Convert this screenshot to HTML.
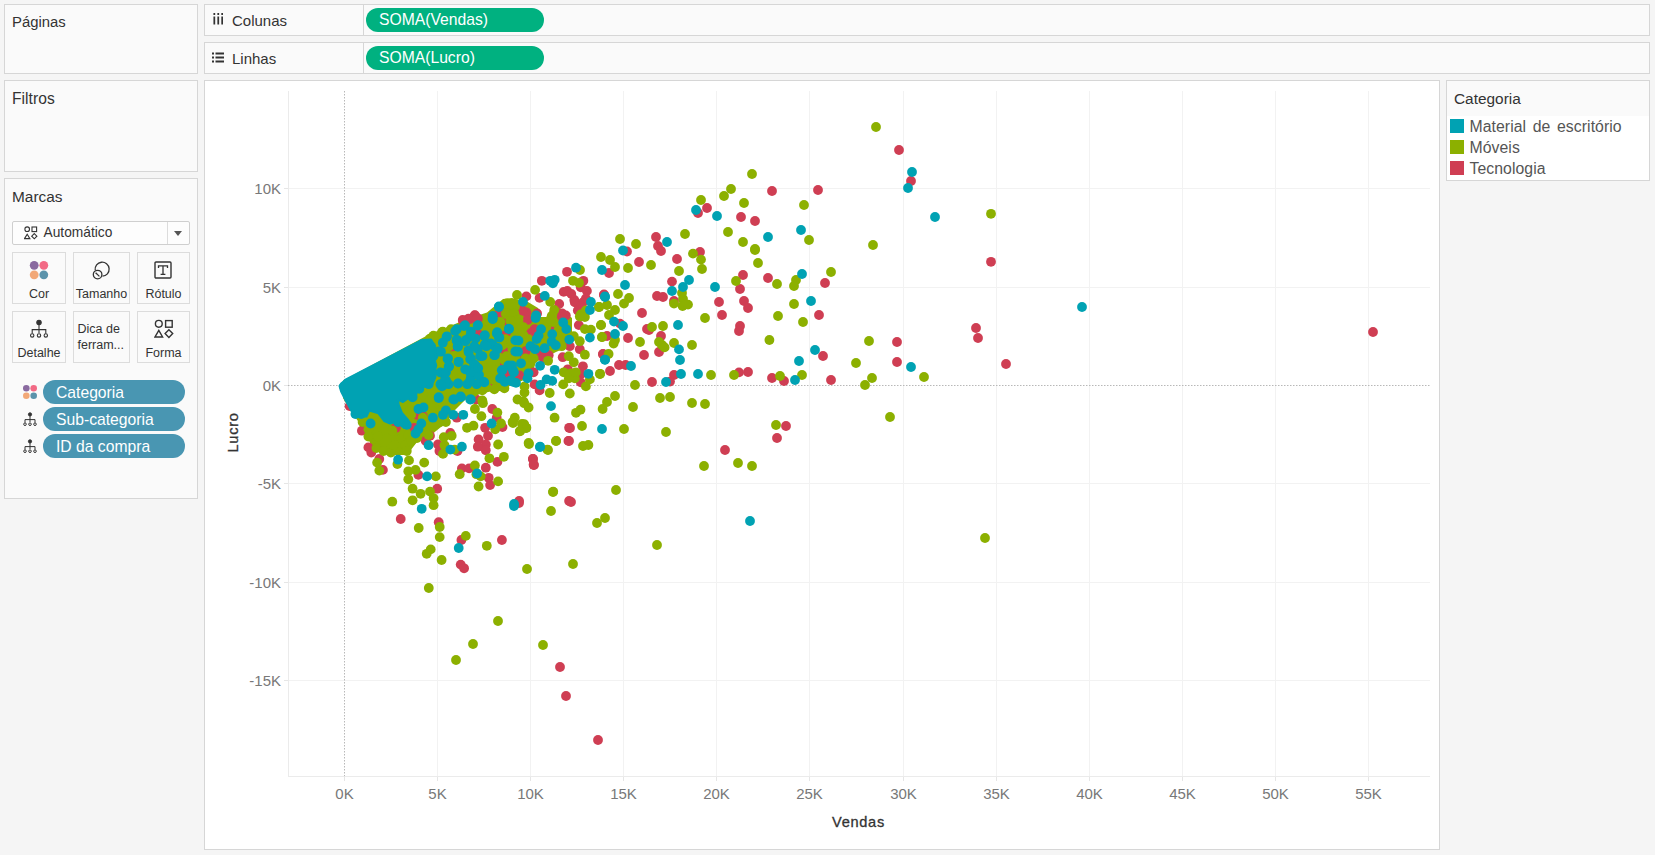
<!DOCTYPE html>
<html lang="pt-BR">
<head>
<meta charset="utf-8">
<title>Tableau - Vendas x Lucro</title>
<style>
html,body{margin:0;padding:0;}
body{width:1655px;height:855px;background:#f5f5f5;position:relative;overflow:hidden;font-family:"Liberation Sans",sans-serif;color:#333;}
.panel{position:absolute;box-sizing:border-box;background:#fafafa;border:1px solid #d6d6d6;}
.ptitle{position:absolute;left:7px;font-size:15px;color:#333;white-space:nowrap;}
.shelf-label{position:absolute;font-size:15px;color:#333;top:7px;left:27px;}
.shelf-sep{position:absolute;left:158px;top:0;bottom:0;width:1px;background:#d6d6d6;}
.pill{position:absolute;box-sizing:border-box;border-radius:12px;color:#fff;white-space:nowrap;}
.gpill{background:#00b180;left:161px;top:3px;width:178px;height:24px;font-size:15.7px;line-height:24px;padding-left:13px;}
.bpill{background:#4996b2;left:38px;width:142px;height:24px;font-size:15.7px;line-height:25.4px;padding-left:13px;}
.btn{position:absolute;box-sizing:border-box;border:1px solid #dcdcdc;background:#fafafa;font-size:12.5px;text-align:center;color:#333;}
.btn span{position:absolute;left:0;right:0;white-space:nowrap;}
.leg{position:absolute;left:22.5px;font-size:15.8px;word-spacing:2.2px;letter-spacing:0.05px;color:#555;white-space:nowrap;}
.sw{position:absolute;left:3px;width:14px;height:14px;}
svg text{font-family:"Liberation Sans",sans-serif;}
</style>
</head>
<body>
<!-- left column -->
<div class="panel" style="left:4px;top:4px;width:194px;height:70px;"><div class="ptitle" style="top:9px;font-size:14.85px;">Páginas</div></div>
<div class="panel" style="left:4px;top:80px;width:194px;height:92px;"><div class="ptitle" style="top:9px;font-size:15.6px;letter-spacing:0.05px;">Filtros</div></div>
<div class="panel" style="left:4px;top:178px;width:194px;height:321px;">
  <div class="ptitle" style="top:8.5px;font-size:15.4px;">Marcas</div>
  <div style="position:absolute;left:7px;top:42px;width:178px;height:24px;border:1px solid #cfcfcf;border-radius:2px;background:#fdfdfd;box-sizing:border-box;">
    <svg width="14" height="14" viewBox="0 0 14 14" style="position:absolute;left:11px;top:4px;" fill="none" stroke="#333" stroke-width="1.1"><circle cx="3.2" cy="3.2" r="2.3"/><rect x="8" y="1" width="4.6" height="4.6"/><path d="M3.2 8.2 L5.9 12.6 L0.5 12.6 Z"/><path d="M10.3 7.6 L12.9 10.2 L10.3 12.8 L7.7 10.2 Z"/></svg>
    <div style="position:absolute;left:30.5px;top:3px;font-size:13.75px;color:#333;">Automático</div>
    <div style="position:absolute;left:154px;top:0;bottom:0;width:1px;background:#dcdcdc;"></div>
    <div style="position:absolute;left:161px;top:9px;width:0;height:0;border-left:4px solid transparent;border-right:4px solid transparent;border-top:5px solid #555;"></div>
  </div>
  <!-- buttons row 1 -->
  <div class="btn" style="left:7px;top:73px;width:54px;height:52px;">
    <svg width="22" height="22" viewBox="0 0 22 22" style="position:absolute;left:15px;top:6.3px;"><circle cx="6.2" cy="6.3" r="4.4" fill="#8a6aa0"/><circle cx="15.8" cy="6.3" r="4.4" fill="#f26a85"/><circle cx="6.2" cy="15.8" r="4.4" fill="#f2a877"/><circle cx="15.8" cy="15.8" r="4.4" fill="#5b93ab"/></svg>
    <span style="top:34px;">Cor</span></div>
  <div class="btn" style="left:68px;top:73px;width:57px;height:52px;">
    <svg width="22" height="22" viewBox="0 0 22 22" style="position:absolute;left:17px;top:7px;" fill="none" stroke="#333" stroke-width="1.3"><path d="M4.2 10.2 A7 7 0 1 1 11.5 16.2"/><circle cx="6.6" cy="14.6" r="4.3"/><path d="M4.6 12.8 L8.4 16.4"/></svg>
    <span style="top:34px;">Tamanho</span></div>
  <div class="btn" style="left:132px;top:73px;width:53px;height:52px;">
    <svg width="20" height="20" viewBox="0 0 20 20" style="position:absolute;left:14.7px;top:7px;" fill="none" stroke="#333" stroke-width="1.4"><rect x="2" y="2" width="16" height="16" rx="1"/><path d="M5.5 8 V5.8 H14.5 V8 M10 5.8 V14.3 M7.6 14.3 H12.4" stroke-width="1.3"/></svg>
    <span style="top:34px;">Rótulo</span></div>
  <!-- buttons row 2 -->
  <div class="btn" style="left:7px;top:132px;width:54px;height:52px;">
    <svg width="22" height="22" viewBox="0 0 22 22" style="position:absolute;left:15px;top:7px;" fill="none" stroke="#333" stroke-width="1.1"><circle cx="11" cy="3.4" r="2.2" fill="#333"/><path d="M11 5.6 V14 M4.2 14.6 V10.6 H17.8 V14.6"/><circle cx="4.2" cy="16.4" r="1.7"/><circle cx="11" cy="16.4" r="1.7"/><circle cx="17.8" cy="16.4" r="1.7"/></svg>
    <span style="top:34px;">Detalhe</span></div>
  <div class="btn" style="left:68px;top:132px;width:57px;height:52px;text-align:left;">
    <span style="top:9px;left:3.5px;line-height:16px;white-space:normal;">Dica de<br>ferram...</span></div>
  <div class="btn" style="left:132px;top:132px;width:53px;height:52px;">
    <svg width="20" height="20" viewBox="0 0 20 20" style="position:absolute;left:16px;top:7px;" fill="none" stroke="#333" stroke-width="1.4"><circle cx="4.8" cy="4.8" r="3.4"/><rect x="11.6" y="1.6" width="6.6" height="6.6"/><path d="M4.8 11.4 L8.6 18 L1 18 Z"/><path d="M14.9 10.8 L18.7 14.6 L14.9 18.4 L11.1 14.6 Z"/></svg>
    <span style="top:34px;">Forma</span></div>
  <!-- pills -->
  <svg width="16" height="16" viewBox="0 0 16 16" style="position:absolute;left:17px;top:205px;"><circle cx="4.3" cy="4.3" r="3.3" fill="#8a6aa0"/><circle cx="11.7" cy="4.3" r="3.3" fill="#f26a85"/><circle cx="4.3" cy="11.7" r="3.3" fill="#f2a877"/><circle cx="11.7" cy="11.7" r="3.3" fill="#5b93ab"/></svg>
  <div class="pill bpill" style="top:201px;">Categoria</div>
  <svg width="16" height="16" viewBox="0 0 16 16" style="position:absolute;left:17px;top:233px;" fill="none" stroke="#333" stroke-width="1"><circle cx="8" cy="2.4" r="1.6" fill="#333"/><path d="M8 4 V10 M3 10.6 V7.6 H13 V10.6"/><circle cx="3" cy="12.2" r="1.3"/><circle cx="8" cy="12.2" r="1.3"/><circle cx="13" cy="12.2" r="1.3"/></svg>
  <div class="pill bpill" style="top:228px;">Sub-categoria</div>
  <svg width="16" height="16" viewBox="0 0 16 16" style="position:absolute;left:17px;top:260px;" fill="none" stroke="#333" stroke-width="1"><circle cx="8" cy="2.4" r="1.6" fill="#333"/><path d="M8 4 V10 M3 10.6 V7.6 H13 V10.6"/><circle cx="3" cy="12.2" r="1.3"/><circle cx="8" cy="12.2" r="1.3"/><circle cx="13" cy="12.2" r="1.3"/></svg>
  <div class="pill bpill" style="top:255px;">ID da compra</div>
</div>
<!-- shelves -->
<div class="panel" style="left:204px;top:4px;width:1446px;height:32px;">
  <svg width="10.5" height="12" viewBox="0 0 12 12" preserveAspectRatio="none" style="position:absolute;left:7.5px;top:8px;" fill="#333"><rect x="0.5" y="0" width="2" height="2"/><rect x="5" y="0" width="2" height="2"/><rect x="9.5" y="0" width="2" height="2"/><rect x="0.5" y="3.5" width="2" height="8"/><rect x="5" y="3.5" width="2" height="8"/><rect x="9.5" y="3.5" width="2" height="8"/></svg>
  <div class="shelf-label">Colunas</div><div class="shelf-sep"></div>
  <div class="pill gpill">SOMA(Vendas)</div>
</div>
<div class="panel" style="left:204px;top:42px;width:1446px;height:32px;">
  <svg width="12" height="11" viewBox="0 0 12 11" style="position:absolute;left:7px;top:9px;" fill="#333"><rect x="0" y="0.5" width="2" height="2"/><rect x="0" y="4.5" width="2" height="2"/><rect x="0" y="8.5" width="2" height="2"/><rect x="3.5" y="0.5" width="8.5" height="2"/><rect x="3.5" y="4.5" width="8.5" height="2"/><rect x="3.5" y="8.5" width="8.5" height="2"/></svg>
  <div class="shelf-label">Linhas</div><div class="shelf-sep"></div>
  <div class="pill gpill">SOMA(Lucro)</div>
</div>
<!-- legend -->
<div class="panel" style="left:1446px;top:80px;width:204px;height:101px;background:#fff;">
  <div style="position:absolute;left:0;top:0;right:0;height:35px;background:#fafafa;"></div>
  <div class="ptitle" style="top:8.5px;left:7px;font-size:15.4px;">Categoria</div>
  <div class="sw" style="top:38px;background:#00a2b3;"></div><div class="leg" style="top:37px;">Material de escritório</div>
  <div class="sw" style="top:59px;background:#8cb000;"></div><div class="leg" style="top:58px;">Móveis</div>
  <div class="sw" style="top:80px;background:#cf3e53;"></div><div class="leg" style="top:79px;">Tecnologia</div>
</div>
<!-- chart -->
<div class="panel" style="left:204px;top:80px;width:1236px;height:770px;background:#fff;">
<svg width="1234" height="768" viewBox="205 81 1234 768" style="position:absolute;left:0;top:0;">
<g shape-rendering="crispEdges">
<rect x="437" y="91" width="1" height="685" fill="#f2f2f2"/>
<rect x="437" y="776" width="1" height="5" fill="#e6e6e6"/>
<rect x="530" y="91" width="1" height="685" fill="#f2f2f2"/>
<rect x="530" y="776" width="1" height="5" fill="#e6e6e6"/>
<rect x="623" y="91" width="1" height="685" fill="#f2f2f2"/>
<rect x="623" y="776" width="1" height="5" fill="#e6e6e6"/>
<rect x="716" y="91" width="1" height="685" fill="#f2f2f2"/>
<rect x="716" y="776" width="1" height="5" fill="#e6e6e6"/>
<rect x="809" y="91" width="1" height="685" fill="#f2f2f2"/>
<rect x="809" y="776" width="1" height="5" fill="#e6e6e6"/>
<rect x="903" y="91" width="1" height="685" fill="#f2f2f2"/>
<rect x="903" y="776" width="1" height="5" fill="#e6e6e6"/>
<rect x="996" y="91" width="1" height="685" fill="#f2f2f2"/>
<rect x="996" y="776" width="1" height="5" fill="#e6e6e6"/>
<rect x="1089" y="91" width="1" height="685" fill="#f2f2f2"/>
<rect x="1089" y="776" width="1" height="5" fill="#e6e6e6"/>
<rect x="1182" y="91" width="1" height="685" fill="#f2f2f2"/>
<rect x="1182" y="776" width="1" height="5" fill="#e6e6e6"/>
<rect x="1275" y="91" width="1" height="685" fill="#f2f2f2"/>
<rect x="1275" y="776" width="1" height="5" fill="#e6e6e6"/>
<rect x="1368" y="91" width="1" height="685" fill="#f2f2f2"/>
<rect x="1368" y="776" width="1" height="5" fill="#e6e6e6"/>
<rect x="288" y="680" width="1142" height="1" fill="#f2f2f2"/>
<rect x="288" y="582" width="1142" height="1" fill="#f2f2f2"/>
<rect x="288" y="483" width="1142" height="1" fill="#f2f2f2"/>
<rect x="288" y="287" width="1142" height="1" fill="#f2f2f2"/>
<rect x="288" y="188" width="1142" height="1" fill="#f2f2f2"/>
<rect x="284" y="680" width="4" height="1" fill="#e6e6e6"/>
<rect x="284" y="582" width="4" height="1" fill="#e6e6e6"/>
<rect x="284" y="483" width="4" height="1" fill="#e6e6e6"/>
<rect x="284" y="385" width="4" height="1" fill="#e6e6e6"/>
<rect x="284" y="287" width="4" height="1" fill="#e6e6e6"/>
<rect x="284" y="188" width="4" height="1" fill="#e6e6e6"/>
<rect x="288" y="91" width="1" height="686" fill="#ebebeb"/>
<rect x="288" y="776" width="1142" height="1" fill="#ebebeb"/>
<rect x="344" y="776" width="1" height="5" fill="#e6e6e6"/>
</g>
<line x1="344.5" y1="91" x2="344.5" y2="776" stroke="#b8b8b8" stroke-width="1" stroke-dasharray="1.5 1.5"/>
<line x1="288" y1="385.5" x2="1430" y2="385.5" stroke="#b8b8b8" stroke-width="1" stroke-dasharray="1.5 1.5"/>
<g font-size="15" fill="#787878" text-anchor="middle">
<text x="344.5" y="799">0K</text>
<text x="437.5" y="799">5K</text>
<text x="530.5" y="799">10K</text>
<text x="623.5" y="799">15K</text>
<text x="716.5" y="799">20K</text>
<text x="809.5" y="799">25K</text>
<text x="903.5" y="799">30K</text>
<text x="996.5" y="799">35K</text>
<text x="1089.5" y="799">40K</text>
<text x="1182.5" y="799">45K</text>
<text x="1275.5" y="799">50K</text>
<text x="1368.5" y="799">55K</text>
</g>
<g font-size="15" fill="#787878" text-anchor="end">
<text x="281" y="685.7">-15K</text>
<text x="281" y="587.7">-10K</text>
<text x="281" y="488.7">-5K</text>
<text x="281" y="390.7">0K</text>
<text x="281" y="292.7">5K</text>
<text x="281" y="193.7">10K</text>
</g>
<text x="858.5" y="827" font-size="14.6" fill="#333" stroke="#333" stroke-width="0.3" letter-spacing="0.7" text-anchor="middle">Vendas</text>
<text transform="translate(238,432.5) rotate(-90)" font-size="14.6" fill="#333" stroke="#333" stroke-width="0.3" letter-spacing="0.7" text-anchor="middle">Lucro</text>
<polygon fill="#8cb000" points="343,380.5 430,334 470,318 487,312.5 496,305 503,299 512,298 528,302 538,308 541,317 548,317 551,306 560,308 572,318 572,345 556,352 546,357 536,362 531,377 505,388 480,394 465,400 455,410 446,423 431,435 417,442 407,455 388,455 373,449 363,428 350,410 343,398"/>
<g fill="#cf3e53">
<circle cx="349.6" cy="406.1" r="4.9"/><circle cx="361.9" cy="430.7" r="4.9"/><circle cx="368.4" cy="447.4" r="4.9"/><circle cx="371.3" cy="452.5" r="4.9"/><circle cx="379.3" cy="459" r="4.9"/><circle cx="382.9" cy="469.9" r="4.9"/><circle cx="395.9" cy="427.8" r="4.9"/><circle cx="417" cy="414.8" r="4.9"/><circle cx="422.8" cy="416.2" r="4.9"/><circle cx="430" cy="435.8" r="4.9"/><circle cx="425.7" cy="440.9" r="4.9"/><circle cx="414.1" cy="427.8" r="4.9"/><circle cx="438" cy="444.5" r="4.9"/><circle cx="439.4" cy="451" r="4.9"/><circle cx="457.5" cy="451" r="4.9"/><circle cx="456.8" cy="417.7" r="4.9"/><circle cx="450.3" cy="432.9" r="4.9"/><circle cx="492.3" cy="409" r="4.9"/><circle cx="496.7" cy="417.7" r="4.9"/><circle cx="485.1" cy="427.8" r="4.9"/><circle cx="488" cy="435.8" r="4.9"/><circle cx="478.6" cy="439.4" r="4.9"/><circle cx="485.8" cy="444.5" r="4.9"/><circle cx="477.8" cy="446.7" r="4.9"/><circle cx="485.8" cy="450.3" r="4.9"/><circle cx="502.5" cy="427.1" r="4.9"/><circle cx="497.4" cy="461.9" r="4.9"/><circle cx="461.9" cy="468.4" r="4.9"/><circle cx="469.1" cy="468.4" r="4.9"/><circle cx="485.8" cy="467.7" r="4.9"/><circle cx="488.7" cy="477.8" r="4.9"/><circle cx="490.1" cy="485.1" r="4.9"/><circle cx="418.4" cy="474.9" r="4.9"/><circle cx="437.2" cy="488.7" r="4.9"/><circle cx="532.9" cy="459" r="4.9"/><circle cx="533.6" cy="464.8" r="4.9"/><circle cx="569.1" cy="427.8" r="4.9"/><circle cx="568.4" cy="440.9" r="4.9"/><circle cx="569.1" cy="501" r="4.9"/><circle cx="519.1" cy="501" r="4.9"/><circle cx="400.7" cy="519" r="4.9"/><circle cx="438.7" cy="522.2" r="4.9"/><circle cx="461.4" cy="540" r="4.9"/><circle cx="501.9" cy="540" r="4.9"/><circle cx="460.7" cy="564.6" r="4.9"/><circle cx="464.1" cy="568.3" r="4.9"/><circle cx="462.7" cy="319.9" r="4.9"/><circle cx="468.5" cy="318.7" r="4.9"/><circle cx="474.9" cy="315.2" r="4.9"/><circle cx="477.9" cy="318.7" r="4.9"/><circle cx="501.3" cy="315.2" r="4.9"/><circle cx="504.8" cy="321.1" r="4.9"/><circle cx="505.9" cy="331.6" r="4.9"/><circle cx="505.9" cy="350.3" r="4.9"/><circle cx="504.8" cy="363.2" r="4.9"/><circle cx="508.3" cy="373.7" r="4.9"/><circle cx="495.4" cy="383" r="4.9"/><circle cx="477.9" cy="333.9" r="4.9"/><circle cx="452.1" cy="346.8" r="4.9"/><circle cx="567" cy="271.8" r="4.9"/><circle cx="541.8" cy="280.8" r="4.9"/><circle cx="583.4" cy="280.8" r="4.9"/><circle cx="580.8" cy="287.3" r="4.9"/><circle cx="586.9" cy="290.9" r="4.9"/><circle cx="563.7" cy="291.9" r="4.9"/><circle cx="567.3" cy="290.9" r="4.9"/><circle cx="571.3" cy="293.9" r="4.9"/><circle cx="574.3" cy="299.9" r="4.9"/><circle cx="574.8" cy="302.4" r="4.9"/><circle cx="585.9" cy="298.4" r="4.9"/><circle cx="582.9" cy="302.4" r="4.9"/><circle cx="580.8" cy="306.5" r="4.9"/><circle cx="577.8" cy="310.5" r="4.9"/><circle cx="604" cy="294.4" r="4.9"/><circle cx="526.3" cy="296.4" r="4.9"/><circle cx="539.6" cy="297.9" r="4.9"/><circle cx="559.2" cy="303.9" r="4.9"/><circle cx="562.2" cy="313.5" r="4.9"/><circle cx="565.8" cy="315.5" r="4.9"/><circle cx="526.5" cy="312.5" r="4.9"/><circle cx="522.5" cy="310.5" r="4.9"/><circle cx="537.1" cy="313.5" r="4.9"/><circle cx="474.7" cy="315.5" r="4.9"/><circle cx="499.4" cy="313.5" r="4.9"/><circle cx="463.1" cy="321" r="4.9"/><circle cx="470.2" cy="319" r="4.9"/><circle cx="477.2" cy="318" r="4.9"/><circle cx="502.4" cy="319" r="4.9"/><circle cx="527.5" cy="320" r="4.9"/><circle cx="530.5" cy="333.1" r="4.9"/><circle cx="534.6" cy="329.1" r="4.9"/><circle cx="555.7" cy="329.1" r="4.9"/><circle cx="506.4" cy="332.1" r="4.9"/><circle cx="504.4" cy="349.2" r="4.9"/><circle cx="509.4" cy="350.2" r="4.9"/><circle cx="520.5" cy="355.2" r="4.9"/><circle cx="525.5" cy="351.2" r="4.9"/><circle cx="540.6" cy="355.2" r="4.9"/><circle cx="548.7" cy="355.2" r="4.9"/><circle cx="543.6" cy="358.3" r="4.9"/><circle cx="569.8" cy="346.2" r="4.9"/><circle cx="579.8" cy="349.2" r="4.9"/><circle cx="578.8" cy="325.1" r="4.9"/><circle cx="562.7" cy="357.2" r="4.9"/><circle cx="582.9" cy="366.3" r="4.9"/><circle cx="580.8" cy="374.4" r="4.9"/><circle cx="580.8" cy="382.4" r="4.9"/><circle cx="567.8" cy="369.3" r="4.9"/><circle cx="534.6" cy="384.4" r="4.9"/><circle cx="539.6" cy="390.4" r="4.9"/><circle cx="533.6" cy="372.3" r="4.9"/><circle cx="505.4" cy="374.4" r="4.9"/><circle cx="519.5" cy="375.4" r="4.9"/><circle cx="496.3" cy="382.4" r="4.9"/><circle cx="603" cy="354.2" r="4.9"/><circle cx="476.2" cy="399.5" r="4.9"/><circle cx="561.7" cy="317" r="4.9"/><circle cx="772" cy="191" r="4.9"/><circle cx="818" cy="190" r="4.9"/><circle cx="707" cy="208" r="4.9"/><circle cx="698" cy="213" r="4.9"/><circle cx="741" cy="217" r="4.9"/><circle cx="755" cy="221" r="4.9"/><circle cx="656" cy="237" r="4.9"/><circle cx="658" cy="246" r="4.9"/><circle cx="661" cy="251" r="4.9"/><circle cx="627" cy="251.5" r="4.9"/><circle cx="609" cy="273" r="4.9"/><circle cx="639" cy="262" r="4.9"/><circle cx="677" cy="259" r="4.9"/><circle cx="700" cy="252" r="4.9"/><circle cx="672" cy="281.6" r="4.9"/><circle cx="674" cy="301" r="4.9"/><circle cx="657" cy="296" r="4.9"/><circle cx="663" cy="297" r="4.9"/><circle cx="604" cy="295" r="4.9"/><circle cx="642" cy="313" r="4.9"/><circle cx="620" cy="323.6" r="4.9"/><circle cx="607" cy="336" r="4.9"/><circle cx="628" cy="338" r="4.9"/><circle cx="644" cy="355" r="4.9"/><circle cx="603" cy="354" r="4.9"/><circle cx="619" cy="365" r="4.9"/><circle cx="625.6" cy="365" r="4.9"/><circle cx="610" cy="371" r="4.9"/><circle cx="652" cy="382" r="4.9"/><circle cx="647" cy="329" r="4.9"/><circle cx="649" cy="330" r="4.9"/><circle cx="661" cy="336" r="4.9"/><circle cx="659" cy="352" r="4.9"/><circle cx="719" cy="302" r="4.9"/><circle cx="722" cy="315" r="4.9"/><circle cx="743" cy="275" r="4.9"/><circle cx="740" cy="289" r="4.9"/><circle cx="744" cy="301" r="4.9"/><circle cx="748" cy="308" r="4.9"/><circle cx="740" cy="326" r="4.9"/><circle cx="739" cy="331" r="4.9"/><circle cx="768" cy="278" r="4.9"/><circle cx="825" cy="283" r="4.9"/><circle cx="819" cy="315" r="4.9"/><circle cx="823" cy="356" r="4.9"/><circle cx="674" cy="375" r="4.9"/><circle cx="739" cy="372.4" r="4.9"/><circle cx="748" cy="372" r="4.9"/><circle cx="670" cy="381.6" r="4.9"/><circle cx="772" cy="378" r="4.9"/><circle cx="784" cy="381" r="4.9"/><circle cx="831" cy="380" r="4.9"/><circle cx="570" cy="428" r="4.9"/><circle cx="786" cy="426" r="4.9"/><circle cx="777" cy="438" r="4.9"/><circle cx="569" cy="441" r="4.9"/><circle cx="533" cy="459" r="4.9"/><circle cx="534" cy="465" r="4.9"/><circle cx="725" cy="450" r="4.9"/><circle cx="519" cy="503" r="4.9"/><circle cx="571" cy="502" r="4.9"/><circle cx="560" cy="667" r="4.9"/><circle cx="566" cy="696" r="4.9"/><circle cx="598" cy="740" r="4.9"/><circle cx="899" cy="150" r="4.9"/><circle cx="911" cy="181" r="4.9"/><circle cx="991" cy="261.8" r="4.9"/><circle cx="976" cy="328" r="4.9"/><circle cx="978" cy="338" r="4.9"/><circle cx="897" cy="342" r="4.9"/><circle cx="897" cy="362" r="4.9"/><circle cx="1006" cy="364" r="4.9"/><circle cx="1373" cy="332" r="4.9"/>
</g>
<g fill="#8cb000">
<circle cx="368.4" cy="429.3" r="4.9"/><circle cx="368.4" cy="436.5" r="4.9"/><circle cx="377.8" cy="436.5" r="4.9"/><circle cx="362.6" cy="422" r="4.9"/><circle cx="377.8" cy="423.5" r="4.9"/><circle cx="385.1" cy="429.3" r="4.9"/><circle cx="392.3" cy="430.7" r="4.9"/><circle cx="376.4" cy="448.1" r="4.9"/><circle cx="383.6" cy="451" r="4.9"/><circle cx="390.9" cy="452.5" r="4.9"/><circle cx="393.8" cy="445.2" r="4.9"/><circle cx="401" cy="438" r="4.9"/><circle cx="408.3" cy="435.1" r="4.9"/><circle cx="405.4" cy="445.2" r="4.9"/><circle cx="411.2" cy="440.9" r="4.9"/><circle cx="417" cy="438" r="4.9"/><circle cx="406.8" cy="451" r="4.9"/><circle cx="409" cy="460.4" r="4.9"/><circle cx="397.4" cy="464.1" r="4.9"/><circle cx="377.1" cy="462.6" r="4.9"/><circle cx="379.3" cy="470.6" r="4.9"/><circle cx="424.2" cy="462.6" r="4.9"/><circle cx="408.3" cy="471.3" r="4.9"/><circle cx="415.5" cy="469.9" r="4.9"/><circle cx="408.3" cy="479.3" r="4.9"/><circle cx="435.8" cy="476.4" r="4.9"/><circle cx="412.6" cy="488.7" r="4.9"/><circle cx="420.6" cy="493.8" r="4.9"/><circle cx="430" cy="491.6" r="4.9"/><circle cx="433.6" cy="498.1" r="4.9"/><circle cx="412.6" cy="500.3" r="4.9"/><circle cx="392.3" cy="501.7" r="4.9"/><circle cx="428.6" cy="435.1" r="4.9"/><circle cx="440.1" cy="422" r="4.9"/><circle cx="445.9" cy="422" r="4.9"/><circle cx="434.3" cy="423.5" r="4.9"/><circle cx="443.8" cy="437.2" r="4.9"/><circle cx="451.7" cy="435.8" r="4.9"/><circle cx="444.5" cy="445.2" r="4.9"/><circle cx="443" cy="453.9" r="4.9"/><circle cx="454.6" cy="449.6" r="4.9"/><circle cx="467" cy="427.8" r="4.9"/><circle cx="473.5" cy="425.7" r="4.9"/><circle cx="474.9" cy="409" r="4.9"/><circle cx="481.4" cy="416.2" r="4.9"/><circle cx="482.9" cy="403.2" r="4.9"/><circle cx="497.4" cy="412.6" r="4.9"/><circle cx="501" cy="423.5" r="4.9"/><circle cx="495.2" cy="429.3" r="4.9"/><circle cx="524.2" cy="403.2" r="4.9"/><circle cx="528.6" cy="407.5" r="4.9"/><circle cx="514.8" cy="417.7" r="4.9"/><circle cx="512.6" cy="422" r="4.9"/><circle cx="524.2" cy="424.2" r="4.9"/><circle cx="526.4" cy="427.8" r="4.9"/><circle cx="519.9" cy="431.4" r="4.9"/><circle cx="498.1" cy="444.5" r="4.9"/><circle cx="528.6" cy="443" r="4.9"/><circle cx="489.4" cy="458.3" r="4.9"/><circle cx="503.9" cy="456.8" r="4.9"/><circle cx="474.9" cy="465.5" r="4.9"/><circle cx="459.7" cy="474.2" r="4.9"/><circle cx="476.4" cy="474.2" r="4.9"/><circle cx="480.7" cy="476.4" r="4.9"/><circle cx="478.6" cy="486.5" r="4.9"/><circle cx="498.1" cy="481.4" r="4.9"/><circle cx="554.6" cy="417.7" r="4.9"/><circle cx="556.1" cy="440.9" r="4.9"/><circle cx="547.4" cy="449.6" r="4.9"/><circle cx="553.2" cy="491.6" r="4.9"/><circle cx="422.8" cy="394.5" r="4.9"/><circle cx="431.4" cy="398.8" r="4.9"/><circle cx="440.1" cy="406.1" r="4.9"/><circle cx="422.8" cy="417.7" r="4.9"/><circle cx="411.2" cy="414.8" r="4.9"/><circle cx="402.5" cy="404.6" r="4.9"/><circle cx="405.4" cy="394.5" r="4.9"/><circle cx="433.6" cy="505.2" r="4.9"/><circle cx="439.7" cy="527" r="4.9"/><circle cx="418.7" cy="528" r="4.9"/><circle cx="439.7" cy="537.1" r="4.9"/><circle cx="465.8" cy="535.9" r="4.9"/><circle cx="486.8" cy="545.8" r="4.9"/><circle cx="430.7" cy="549.4" r="4.9"/><circle cx="426.7" cy="553.8" r="4.9"/><circle cx="441.6" cy="560" r="4.9"/><circle cx="428.8" cy="588" r="4.9"/><circle cx="433.4" cy="335.7" r="4.9"/><circle cx="442.8" cy="331.6" r="4.9"/><circle cx="451" cy="329.2" r="4.9"/><circle cx="429.9" cy="338.6" r="4.9"/><circle cx="507.1" cy="303.5" r="4.9"/><circle cx="513" cy="307" r="4.9"/><circle cx="505.9" cy="314" r="4.9"/><circle cx="497.8" cy="322.2" r="4.9"/><circle cx="489.6" cy="323.4" r="4.9"/><circle cx="580" cy="270" r="4.9"/><circle cx="573" cy="280.8" r="4.9"/><circle cx="579" cy="282.8" r="4.9"/><circle cx="599" cy="307" r="4.9"/><circle cx="535.1" cy="289.9" r="4.9"/><circle cx="517" cy="294.9" r="4.9"/><circle cx="550.2" cy="301.9" r="4.9"/><circle cx="554.2" cy="310" r="4.9"/><circle cx="506.9" cy="303.9" r="4.9"/><circle cx="514.9" cy="307" r="4.9"/><circle cx="506.4" cy="313.5" r="4.9"/><circle cx="514.4" cy="313.5" r="4.9"/><circle cx="580.8" cy="314.5" r="4.9"/><circle cx="585.9" cy="310.5" r="4.9"/><circle cx="551.7" cy="316" r="4.9"/><circle cx="500.4" cy="322" r="4.9"/><circle cx="510.4" cy="321" r="4.9"/><circle cx="518.5" cy="320" r="4.9"/><circle cx="523.5" cy="327.1" r="4.9"/><circle cx="517.5" cy="329.1" r="4.9"/><circle cx="500.4" cy="327.1" r="4.9"/><circle cx="490.3" cy="329.1" r="4.9"/><circle cx="505.4" cy="339.1" r="4.9"/><circle cx="510.4" cy="344.2" r="4.9"/><circle cx="502.4" cy="345.2" r="4.9"/><circle cx="523.5" cy="335.1" r="4.9"/><circle cx="528.5" cy="339.1" r="4.9"/><circle cx="546.6" cy="322" r="4.9"/><circle cx="553.7" cy="322" r="4.9"/><circle cx="558.7" cy="329.1" r="4.9"/><circle cx="560.7" cy="336.1" r="4.9"/><circle cx="561.7" cy="346.2" r="4.9"/><circle cx="573.8" cy="336.1" r="4.9"/><circle cx="579.8" cy="341.2" r="4.9"/><circle cx="550.7" cy="319" r="4.9"/><circle cx="584.9" cy="329.1" r="4.9"/><circle cx="590.9" cy="329.6" r="4.9"/><circle cx="584.9" cy="317" r="4.9"/><circle cx="579.8" cy="316.5" r="4.9"/><circle cx="601" cy="325.1" r="4.9"/><circle cx="602" cy="337.1" r="4.9"/><circle cx="584.9" cy="354.7" r="4.9"/><circle cx="568.8" cy="356.2" r="4.9"/><circle cx="573.8" cy="362.3" r="4.9"/><circle cx="548.1" cy="360.8" r="4.9"/><circle cx="530.5" cy="360.3" r="4.9"/><circle cx="527.5" cy="364.3" r="4.9"/><circle cx="506.4" cy="356.2" r="4.9"/><circle cx="504.4" cy="360.3" r="4.9"/><circle cx="496.3" cy="360.3" r="4.9"/><circle cx="490.3" cy="364.3" r="4.9"/><circle cx="485.3" cy="368.3" r="4.9"/><circle cx="493.3" cy="370.3" r="4.9"/><circle cx="488.3" cy="376.4" r="4.9"/><circle cx="494.3" cy="380.4" r="4.9"/><circle cx="500.4" cy="386.4" r="4.9"/><circle cx="494.3" cy="389.4" r="4.9"/><circle cx="504.4" cy="388.4" r="4.9"/><circle cx="524.5" cy="386.4" r="4.9"/><circle cx="524.5" cy="392.5" r="4.9"/><circle cx="517.5" cy="399.5" r="4.9"/><circle cx="523.5" cy="401.5" r="4.9"/><circle cx="549.7" cy="393" r="4.9"/><circle cx="569.8" cy="393.5" r="4.9"/><circle cx="563.2" cy="384.4" r="4.9"/><circle cx="563.7" cy="372.3" r="4.9"/><circle cx="570.8" cy="373.3" r="4.9"/><circle cx="574.8" cy="378.4" r="4.9"/><circle cx="568.8" cy="378.4" r="4.9"/><circle cx="575.8" cy="372.3" r="4.9"/><circle cx="585.9" cy="386.4" r="4.9"/><circle cx="589.9" cy="379.4" r="4.9"/><circle cx="600" cy="373.8" r="4.9"/><circle cx="459.1" cy="335.1" r="4.9"/><circle cx="464.1" cy="335.1" r="4.9"/><circle cx="442" cy="332.1" r="4.9"/><circle cx="444" cy="344.2" r="4.9"/><circle cx="449.1" cy="346.2" r="4.9"/><circle cx="453.1" cy="356.2" r="4.9"/><circle cx="457.1" cy="372.3" r="4.9"/><circle cx="460.1" cy="375.4" r="4.9"/><circle cx="453.1" cy="370.3" r="4.9"/><circle cx="482.3" cy="390.4" r="4.9"/><circle cx="473.2" cy="392.5" r="4.9"/><circle cx="465.2" cy="390.4" r="4.9"/><circle cx="452.1" cy="389.4" r="4.9"/><circle cx="446" cy="392.5" r="4.9"/><circle cx="444" cy="398.5" r="4.9"/><circle cx="482.3" cy="400.5" r="4.9"/><circle cx="457.1" cy="393.5" r="4.9"/><circle cx="525.5" cy="358.3" r="4.9"/><circle cx="533.6" cy="358.3" r="4.9"/><circle cx="515.5" cy="358.3" r="4.9"/><circle cx="512.4" cy="349.2" r="4.9"/><circle cx="752" cy="174" r="4.9"/><circle cx="731" cy="189" r="4.9"/><circle cx="724" cy="196" r="4.9"/><circle cx="701" cy="200" r="4.9"/><circle cx="744" cy="203" r="4.9"/><circle cx="804" cy="205" r="4.9"/><circle cx="728" cy="232" r="4.9"/><circle cx="685" cy="234" r="4.9"/><circle cx="809" cy="240" r="4.9"/><circle cx="743" cy="242" r="4.9"/><circle cx="620" cy="239" r="4.9"/><circle cx="636" cy="244" r="4.9"/><circle cx="755" cy="249" r="4.9"/><circle cx="601" cy="257" r="4.9"/><circle cx="610" cy="260" r="4.9"/><circle cx="615" cy="267" r="4.9"/><circle cx="628" cy="268" r="4.9"/><circle cx="651" cy="265" r="4.9"/><circle cx="693" cy="253.6" r="4.9"/><circle cx="701" cy="259.6" r="4.9"/><circle cx="702" cy="269" r="4.9"/><circle cx="679" cy="271" r="4.9"/><circle cx="682" cy="293" r="4.9"/><circle cx="683" cy="299" r="4.9"/><circle cx="674" cy="303.6" r="4.9"/><circle cx="682.6" cy="306" r="4.9"/><circle cx="688" cy="304.6" r="4.9"/><circle cx="618" cy="294" r="4.9"/><circle cx="629" cy="298" r="4.9"/><circle cx="624" cy="303.6" r="4.9"/><circle cx="599" cy="307" r="4.9"/><circle cx="607" cy="305" r="4.9"/><circle cx="615" cy="310" r="4.9"/><circle cx="609" cy="315" r="4.9"/><circle cx="601" cy="325" r="4.9"/><circle cx="602" cy="337" r="4.9"/><circle cx="615" cy="340" r="4.9"/><circle cx="613.6" cy="343.6" r="4.9"/><circle cx="640" cy="342" r="4.9"/><circle cx="608.6" cy="354" r="4.9"/><circle cx="600" cy="374" r="4.9"/><circle cx="635" cy="385" r="4.9"/><circle cx="615" cy="396" r="4.9"/><circle cx="607" cy="402" r="4.9"/><circle cx="602.6" cy="409" r="4.9"/><circle cx="633" cy="407" r="4.9"/><circle cx="652" cy="327" r="4.9"/><circle cx="663" cy="326" r="4.9"/><circle cx="659" cy="342" r="4.9"/><circle cx="662" cy="345" r="4.9"/><circle cx="664.6" cy="347.4" r="4.9"/><circle cx="674" cy="343" r="4.9"/><circle cx="692" cy="345" r="4.9"/><circle cx="705" cy="318" r="4.9"/><circle cx="736" cy="281" r="4.9"/><circle cx="758" cy="263" r="4.9"/><circle cx="755" cy="250" r="4.9"/><circle cx="777" cy="284" r="4.9"/><circle cx="796" cy="280" r="4.9"/><circle cx="794" cy="286" r="4.9"/><circle cx="831" cy="272" r="4.9"/><circle cx="794" cy="304" r="4.9"/><circle cx="778" cy="316" r="4.9"/><circle cx="803" cy="322" r="4.9"/><circle cx="769.4" cy="340" r="4.9"/><circle cx="711" cy="375" r="4.9"/><circle cx="734" cy="375" r="4.9"/><circle cx="780" cy="376" r="4.9"/><circle cx="802" cy="375" r="4.9"/><circle cx="660" cy="398" r="4.9"/><circle cx="670" cy="397" r="4.9"/><circle cx="692" cy="403" r="4.9"/><circle cx="705" cy="404" r="4.9"/><circle cx="513" cy="423" r="4.9"/><circle cx="522" cy="424" r="4.9"/><circle cx="526" cy="428" r="4.9"/><circle cx="520" cy="431" r="4.9"/><circle cx="582" cy="426" r="4.9"/><circle cx="624" cy="429" r="4.9"/><circle cx="666" cy="432" r="4.9"/><circle cx="776" cy="425" r="4.9"/><circle cx="529" cy="444" r="4.9"/><circle cx="548" cy="450" r="4.9"/><circle cx="556" cy="441" r="4.9"/><circle cx="583" cy="446" r="4.9"/><circle cx="588.4" cy="445" r="4.9"/><circle cx="704" cy="466" r="4.9"/><circle cx="738" cy="463" r="4.9"/><circle cx="752" cy="466" r="4.9"/><circle cx="553" cy="492" r="4.9"/><circle cx="616" cy="490" r="4.9"/><circle cx="551" cy="511" r="4.9"/><circle cx="605" cy="518" r="4.9"/><circle cx="597" cy="523" r="4.9"/><circle cx="657" cy="545" r="4.9"/><circle cx="573" cy="564" r="4.9"/><circle cx="527" cy="569" r="4.9"/><circle cx="498" cy="621" r="4.9"/><circle cx="473" cy="644" r="4.9"/><circle cx="543" cy="645" r="4.9"/><circle cx="456" cy="660" r="4.9"/><circle cx="576" cy="412.8" r="4.9"/><circle cx="580.5" cy="409.7" r="4.9"/><circle cx="876" cy="127" r="4.9"/><circle cx="991" cy="213.8" r="4.9"/><circle cx="873" cy="245" r="4.9"/><circle cx="869" cy="341" r="4.9"/><circle cx="856" cy="363" r="4.9"/><circle cx="924" cy="377" r="4.9"/><circle cx="872" cy="378" r="4.9"/><circle cx="865" cy="385" r="4.9"/><circle cx="890" cy="417" r="4.9"/><circle cx="985" cy="538" r="4.9"/>
</g>
<g fill="#00a2b3">
<circle cx="361.2" cy="414.1" r="4.9"/><circle cx="370.6" cy="423.5" r="4.9"/><circle cx="355.4" cy="414.1" r="4.9"/><circle cx="412.6" cy="397.4" r="4.9"/><circle cx="418.4" cy="409" r="4.9"/><circle cx="423.5" cy="407.5" r="4.9"/><circle cx="438.7" cy="398.1" r="4.9"/><circle cx="445.9" cy="410.4" r="4.9"/><circle cx="443" cy="414.8" r="4.9"/><circle cx="453.2" cy="414.8" r="4.9"/><circle cx="432.9" cy="417.7" r="4.9"/><circle cx="463.3" cy="414.8" r="4.9"/><circle cx="421.3" cy="423.5" r="4.9"/><circle cx="418.4" cy="429.3" r="4.9"/><circle cx="415.5" cy="433.6" r="4.9"/><circle cx="390.9" cy="419.1" r="4.9"/><circle cx="398.1" cy="422" r="4.9"/><circle cx="406.8" cy="424.9" r="4.9"/><circle cx="428.6" cy="445.2" r="4.9"/><circle cx="450.3" cy="449.6" r="4.9"/><circle cx="461.9" cy="446.7" r="4.9"/><circle cx="398.1" cy="459.7" r="4.9"/><circle cx="427.1" cy="476.4" r="4.9"/><circle cx="477.1" cy="473.5" r="4.9"/><circle cx="491.6" cy="423.5" r="4.9"/><circle cx="551" cy="406.1" r="4.9"/><circle cx="540.1" cy="446.7" r="4.9"/><circle cx="514.1" cy="503.9" r="4.9"/><circle cx="421.7" cy="508.8" r="4.9"/><circle cx="458.7" cy="548" r="4.9"/><circle cx="498.9" cy="306.4" r="4.9"/><circle cx="492.5" cy="318.7" r="4.9"/><circle cx="477.9" cy="325.1" r="4.9"/><circle cx="508.9" cy="328.7" r="4.9"/><circle cx="465" cy="325.1" r="4.9"/><circle cx="456.8" cy="329.2" r="4.9"/><circle cx="470.9" cy="331.6" r="4.9"/><circle cx="446.9" cy="336.3" r="4.9"/><circle cx="442.8" cy="342.7" r="4.9"/><circle cx="438.7" cy="351.5" r="4.9"/><circle cx="456.8" cy="339.8" r="4.9"/><circle cx="458" cy="346.8" r="4.9"/><circle cx="466.2" cy="339.8" r="4.9"/><circle cx="475.5" cy="338.6" r="4.9"/><circle cx="484.9" cy="335.1" r="4.9"/><circle cx="497.2" cy="332.2" r="4.9"/><circle cx="498.9" cy="337.4" r="4.9"/><circle cx="490.7" cy="343.3" r="4.9"/><circle cx="497.8" cy="348" r="4.9"/><circle cx="484.9" cy="344.4" r="4.9"/><circle cx="494.2" cy="355" r="4.9"/><circle cx="515.3" cy="340.4" r="4.9"/><circle cx="515.3" cy="351.5" r="4.9"/><circle cx="448" cy="358.5" r="4.9"/><circle cx="458.6" cy="362" r="4.9"/><circle cx="468.5" cy="350.3" r="4.9"/><circle cx="477.9" cy="349.1" r="4.9"/><circle cx="470.9" cy="358.5" r="4.9"/><circle cx="482.5" cy="356.1" r="4.9"/><circle cx="475.5" cy="365.5" r="4.9"/><circle cx="470.9" cy="370.2" r="4.9"/><circle cx="448.6" cy="366.7" r="4.9"/><circle cx="440.4" cy="372.5" r="4.9"/><circle cx="445.1" cy="379.5" r="4.9"/><circle cx="440.4" cy="384.2" r="4.9"/><circle cx="448.6" cy="384.2" r="4.9"/><circle cx="458" cy="383.6" r="4.9"/><circle cx="467.3" cy="384.2" r="4.9"/><circle cx="470.9" cy="377.2" r="4.9"/><circle cx="479" cy="374.9" r="4.9"/><circle cx="483.7" cy="381.9" r="4.9"/><circle cx="476.7" cy="384.2" r="4.9"/><circle cx="501.8" cy="370.2" r="4.9"/><circle cx="500.1" cy="378.4" r="4.9"/><circle cx="508.3" cy="365.5" r="4.9"/><circle cx="513" cy="370.2" r="4.9"/><circle cx="513" cy="381.9" r="4.9"/><circle cx="504.8" cy="381.9" r="4.9"/><circle cx="412.4" cy="395.9" r="4.9"/><circle cx="438.7" cy="397.1" r="4.9"/><circle cx="460.9" cy="397.1" r="4.9"/><circle cx="470.9" cy="399.4" r="4.9"/><circle cx="453.3" cy="399.4" r="4.9"/><circle cx="431.1" cy="346.8" r="4.9"/><circle cx="433.4" cy="356.1" r="4.9"/><circle cx="432.3" cy="365.5" r="4.9"/><circle cx="431.1" cy="376" r="4.9"/><circle cx="428.7" cy="384.2" r="4.9"/><circle cx="419.4" cy="388.9" r="4.9"/><circle cx="407.7" cy="391.2" r="4.9"/><circle cx="576" cy="267.7" r="4.9"/><circle cx="550.2" cy="280.8" r="4.9"/><circle cx="554.7" cy="279.8" r="4.9"/><circle cx="552.9" cy="283.3" r="4.9"/><circle cx="590.9" cy="301.9" r="4.9"/><circle cx="589.9" cy="310" r="4.9"/><circle cx="605" cy="296.4" r="4.9"/><circle cx="523" cy="301.9" r="4.9"/><circle cx="544.8" cy="295.9" r="4.9"/><circle cx="498.9" cy="307" r="4.9"/><circle cx="536.1" cy="315.5" r="4.9"/><circle cx="492.8" cy="316" r="4.9"/><circle cx="492.8" cy="319" r="4.9"/><circle cx="535.6" cy="318" r="4.9"/><circle cx="563.2" cy="322.5" r="4.9"/><circle cx="566.3" cy="329.1" r="4.9"/><circle cx="477.7" cy="325.6" r="4.9"/><circle cx="508.9" cy="329.1" r="4.9"/><circle cx="541.1" cy="329.1" r="4.9"/><circle cx="464.1" cy="326.1" r="4.9"/><circle cx="455.1" cy="331.1" r="4.9"/><circle cx="496.8" cy="333.6" r="4.9"/><circle cx="552.2" cy="334.1" r="4.9"/><circle cx="538.6" cy="335.6" r="4.9"/><circle cx="484.3" cy="336.1" r="4.9"/><circle cx="446.5" cy="337.1" r="4.9"/><circle cx="569.3" cy="339.6" r="4.9"/><circle cx="589.9" cy="337.6" r="4.9"/><circle cx="456.6" cy="340.6" r="4.9"/><circle cx="499.4" cy="337.6" r="4.9"/><circle cx="470.2" cy="336.1" r="4.9"/><circle cx="465.2" cy="341.2" r="4.9"/><circle cx="518.5" cy="340.6" r="4.9"/><circle cx="551.7" cy="341.7" r="4.9"/><circle cx="530.5" cy="346.2" r="4.9"/><circle cx="535.1" cy="349.2" r="4.9"/><circle cx="544.6" cy="348.2" r="4.9"/><circle cx="457.6" cy="346.2" r="4.9"/><circle cx="493.3" cy="345.2" r="4.9"/><circle cx="497.3" cy="349.2" r="4.9"/><circle cx="486.3" cy="346.2" r="4.9"/><circle cx="474.2" cy="346.2" r="4.9"/><circle cx="518" cy="351.7" r="4.9"/><circle cx="494.8" cy="355.2" r="4.9"/><circle cx="468.7" cy="352.2" r="4.9"/><circle cx="441" cy="351.7" r="4.9"/><circle cx="447.5" cy="358.8" r="4.9"/><circle cx="458.6" cy="361.8" r="4.9"/><circle cx="470.2" cy="359.3" r="4.9"/><circle cx="480.2" cy="356.2" r="4.9"/><circle cx="474.2" cy="364.3" r="4.9"/><circle cx="521" cy="363.3" r="4.9"/><circle cx="511.9" cy="365.3" r="4.9"/><circle cx="540.1" cy="365.8" r="4.9"/><circle cx="554.7" cy="369.8" r="4.9"/><circle cx="502.4" cy="370.3" r="4.9"/><circle cx="513.9" cy="372.3" r="4.9"/><circle cx="528.5" cy="373.3" r="4.9"/><circle cx="501.4" cy="378.4" r="4.9"/><circle cx="510.4" cy="380.4" r="4.9"/><circle cx="527.5" cy="378.4" r="4.9"/><circle cx="516" cy="382.9" r="4.9"/><circle cx="546.6" cy="379.4" r="4.9"/><circle cx="552.2" cy="380.9" r="4.9"/><circle cx="540.6" cy="384.9" r="4.9"/><circle cx="588.4" cy="373.8" r="4.9"/><circle cx="605" cy="359.8" r="4.9"/><circle cx="478.2" cy="375.4" r="4.9"/><circle cx="484.3" cy="382.4" r="4.9"/><circle cx="470.2" cy="380.4" r="4.9"/><circle cx="458.1" cy="383.4" r="4.9"/><circle cx="446" cy="372.3" r="4.9"/><circle cx="446" cy="380.4" r="4.9"/><circle cx="449.1" cy="366.3" r="4.9"/><circle cx="470.2" cy="372.3" r="4.9"/><circle cx="460.6" cy="396.5" r="4.9"/><circle cx="470.2" cy="399.5" r="4.9"/><circle cx="454.1" cy="399.5" r="4.9"/><circle cx="442" cy="386.4" r="4.9"/><circle cx="536.6" cy="339.1" r="4.9"/><circle cx="555.7" cy="345.2" r="4.9"/><circle cx="478.2" cy="368.3" r="4.9"/><circle cx="465.2" cy="369.3" r="4.9"/><circle cx="696" cy="210" r="4.9"/><circle cx="717" cy="216" r="4.9"/><circle cx="801" cy="230" r="4.9"/><circle cx="768" cy="237" r="4.9"/><circle cx="667" cy="242" r="4.9"/><circle cx="623" cy="250.5" r="4.9"/><circle cx="602" cy="270" r="4.9"/><circle cx="689" cy="280" r="4.9"/><circle cx="683" cy="287" r="4.9"/><circle cx="672" cy="291" r="4.9"/><circle cx="625" cy="285" r="4.9"/><circle cx="605" cy="297" r="4.9"/><circle cx="614" cy="321.6" r="4.9"/><circle cx="623" cy="326" r="4.9"/><circle cx="615" cy="334" r="4.9"/><circle cx="605" cy="359.6" r="4.9"/><circle cx="631" cy="366" r="4.9"/><circle cx="678" cy="325" r="4.9"/><circle cx="679" cy="349.4" r="4.9"/><circle cx="680" cy="360" r="4.9"/><circle cx="715" cy="287" r="4.9"/><circle cx="802" cy="274" r="4.9"/><circle cx="811" cy="301" r="4.9"/><circle cx="815" cy="350" r="4.9"/><circle cx="799" cy="361" r="4.9"/><circle cx="681" cy="374" r="4.9"/><circle cx="698" cy="374" r="4.9"/><circle cx="666" cy="382" r="4.9"/><circle cx="795" cy="380" r="4.9"/><circle cx="602" cy="429" r="4.9"/><circle cx="540" cy="447" r="4.9"/><circle cx="514" cy="506" r="4.9"/><circle cx="750" cy="521" r="4.9"/><circle cx="912" cy="172" r="4.9"/><circle cx="908" cy="188" r="4.9"/><circle cx="935" cy="217" r="4.9"/><circle cx="1082" cy="307" r="4.9"/><circle cx="911" cy="367" r="4.9"/>
<polygon points="339.5,386 345,380 422,340 431,339.5 435,346 435.5,377 433,382.5 427.5,387 418.5,386.5 416,395.5 409,397.8 403,402 397.8,399.5 398.8,405.2 402,413 408.5,420.4 409.5,426 404.2,428 396,421.6 390,423.6 384.3,421.2 378.4,413.4 369.3,410.5 366.5,416.5 354,415.5 351.5,411 345.7,400.6 341,391.2" stroke="#00a2b3" stroke-width="2" stroke-linejoin="round"/>
<circle cx="344" cy="386.2" r="4.9"/>
</g>
</svg>
</div>
</body>
</html>
